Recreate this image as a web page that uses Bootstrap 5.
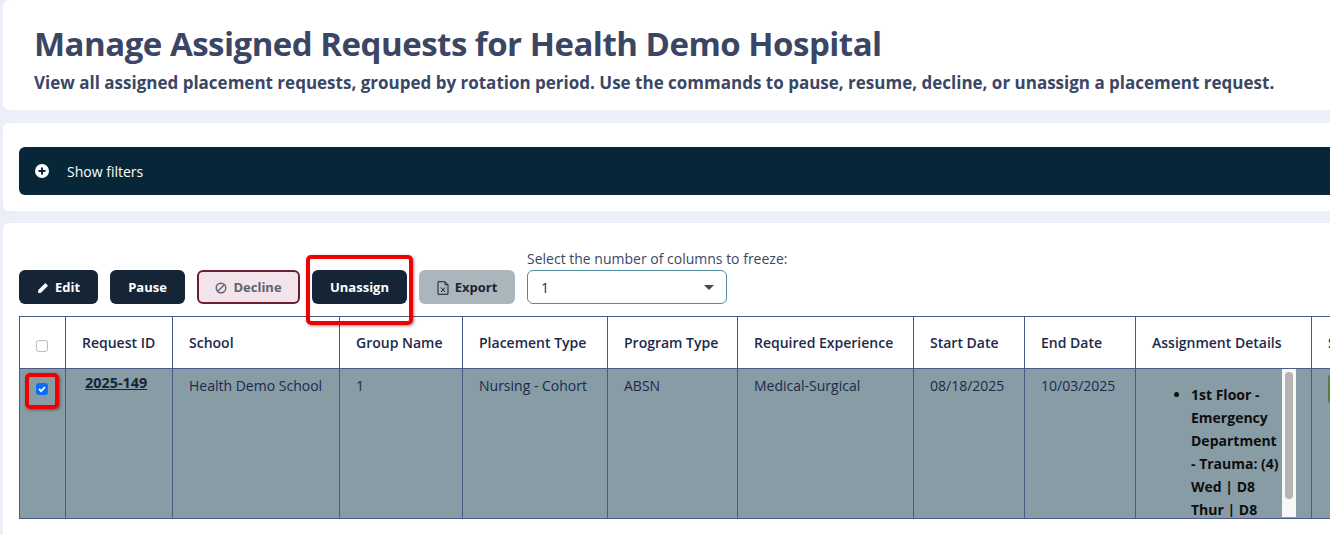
<!DOCTYPE html>
<html lang="en">
  <head>
    <meta charset="utf-8" />
    <meta name="viewport" content="width=device-width, initial-scale=1" />
    <title>Manage Assigned Requests</title>
    <link
      rel="stylesheet"
      href="https://cdn.jsdelivr.net/npm/bootstrap@5.3.0/dist/css/bootstrap.min.css"
    />
    <style>
      html, body { height: 100%; overflow: hidden; }
      body {
        background-color: #eceef8;
        font-family: "Open Sans", "Liberation Sans", sans-serif;
        color: #1b2a4a;
      }
      .page-wrap {
        width: 1600px;
        padding-left: 3px;
        display: flex;
        flex-direction: column;
        gap: 12px;
      }
      .panel { background: #fff; border-radius: 6px; }
      .panel-head { height: 110px; padding: 23px 0 0 31px; margin-bottom: 1px; }
      .panel-head h1 {
        font-size: 33px; font-weight: 700; color: #3b4664; line-height: 42px;
        margin: 0; letter-spacing: -0.5px;
      }
      .panel-head p {
        font-size: 17px; font-weight: 700; color: #3b4664; line-height: 22px;
        margin: 7px 0 0;
      }
      .panel-filter { height: 88px; padding: 24px 16px 0; }
      .filter-bar {
        background: #072638; color: #fff; height: 48px; border-radius: 6px;
        padding-left: 16px; font-size: 14px; gap: 18px;
      }
      .panel-main { height: 330px; padding: 25px 16px 0; position: relative; overflow: hidden; }
      .tool-row { height: 68px; align-items: flex-end; padding-bottom: 12px; }
      .act-btn {
        height: 34px; font-size: 13px; font-weight: 700; border-radius: 6px;
        border: 0; padding: 1px 0 0; display: inline-flex; align-items: center;
        justify-content: center; gap: 6px; color: #fff; background: #152536;
      }
      .act-edit { width: 79px; margin-right: 12px; }
      .act-pause { width: 75px; margin-right: 12px; }
      .act-decline {
        width: 103px; margin-right: 12px; background: #f3e3ea; color: #5c6470;
        border: 2px solid #6b1f33;
      }
      .act-unassign { width: 95px; margin-right: 12px; }
      .act-export { width: 96px; margin-right: 12px; background: #abb5bc; color: #152536; }
      .freeze-label { font-size: 14px; line-height: 19px; color: #3b4664; margin-bottom: 2px; }
      .freeze-select {
        width: 200px; height: 34px; border: 1px solid #4f8a9e; border-radius: 6px;
        padding: 0 12px 0 13px; font-size: 14px; color: #1b2a4a; background: #fff;
      }
      .freeze-caret {
        width: 0; height: 0; border-left: 5px solid transparent;
        border-right: 5px solid transparent; border-top: 5px solid #3f4a5a;
      }
      .req-table {
        table-layout: fixed; border-collapse: collapse; width: 1420px;
        font-size: 14px; margin: 0;
      }
      .req-table th, .req-table td {
        border: 1px solid #4b5a8a; padding: 0 16px; color: #1b2a4a;
      }
      .req-table th { height: 52px; font-weight: 600; background: #fff; padding-bottom: 1px; }
      .req-table td { height: 150px; background: #889ca6; vertical-align: top; padding-top: 6px; }
      .c-check { width: 46px; }
      .c-id { width: 107px; }
      .c-school { width: 167px; }
      .c-group { width: 123px; }
      .c-place { width: 145px; }
      .c-prog { width: 130px; }
      .c-exp { width: 176px; }
      .c-date { width: 111px; }
      .c-assign { width: 176px; }
      .req-table th.cell-check, .req-table td.cell-check { padding: 0; text-align: center; }
      .req-table td.cell-check { padding-top: 14px; }
      .req-table th.cell-check { vertical-align: middle; padding-top: 6px; }
      .box-empty, .box-checked { width: 12px; height: 12px; display: block; margin: 0 0 0 16px; border-radius: 3px; }
      .box-empty { background: #fff; border: 1px solid #bcbcbc; }
      .box-checked { background: #0b6cf5; }
      .req-table td.cell-link { padding-left: 19px; padding-right: 0; }
      .req-link { font-size: 14.4px; font-weight: 700; color: #152536; text-decoration: underline; display: block; margin-top: -3px; }
      .req-table td.cell-assign { padding: 0; }
      .assign-scroll { height: 148px; overflow: hidden; display: flex; }
      .assign-list {
        flex: 1; margin: 0; padding: 14px 0 0 55px; font-weight: 700; color: #0e0e0e;
        line-height: 23px; font-size: 14px;
      }
      .assign-list li { color: #0e0e0e; }
      .fake-scroll { width: 14px; margin-right: 15px; background: #f7f7f7; padding: 3px 3px 0; flex: none; }
      .fake-thumb { width: 8px; height: 127px; background: #b4b4b4; border-radius: 4px; }
      .status-chip { width: 30px; height: 30px; background: #5c7a3a; border-radius: 4px; }
      .req-table td.cell-status { padding: 5px 0 0 16px; }
      .mark-box {
        position: absolute; border: 4px solid #f00000; border-radius: 5px;
        box-shadow: 1px 1px 3px rgba(0, 0, 0, 0.45); pointer-events: none;
      }
      .mark-unassign { left: 303px; top: 32px; width: 107px; height: 70px; }
      .mark-check { left: 22px; top: 150px; width: 34px; height: 36px; }
    </style>
  </head>
  <body>
    <div class="page-wrap">
      <div class="panel panel-head">
        <h1>Manage Assigned Requests for Health Demo Hospital</h1>
        <p>View all assigned placement requests, grouped by rotation period. Use the commands to pause, resume, decline, or unassign a placement request.</p>
      </div>
      <div class="panel panel-filter">
        <div class="filter-bar d-flex align-items-center">
          <svg width="14" height="14" viewBox="0 0 14 14"><circle cx="7" cy="7" r="7" fill="#fff"/><path d="M7 3.5v7M3.5 7h7" stroke="#072638" stroke-width="2"/></svg>
          <span>Show filters</span>
        </div>
      </div>
      <div class="panel panel-main">
        <div class="d-flex tool-row">
          <button class="act-btn act-edit">
            <svg width="12" height="12" viewBox="0 0 12 12"><path d="M8.3 1 11 3.7 4 10.7 1 11l.3-3z" fill="#fff"/></svg>
            Edit
          </button>
          <button class="act-btn act-pause">Pause</button>
          <button class="act-btn act-decline">
            <svg width="12" height="12" viewBox="0 0 12 12" fill="none" stroke="#5c6470" stroke-width="1.4"><circle cx="6" cy="6" r="4.8"/><path d="M2.7 9.3 9.3 2.7"/></svg>
            Decline
          </button>
          <button class="act-btn act-unassign">Unassign</button>
          <button class="act-btn act-export">
            <svg width="12" height="14" viewBox="0 0 12 14" fill="none" stroke="#152536" stroke-width="1"><path d="M1 .7h7l3 3v9.6H1zM8 .7v3h3"/><path d="m4 6.5 4 4.5m0-4.5L4 11"/></svg>
            Export
          </button>
          <div>
            <div class="freeze-label">Select the number of columns to freeze:</div>
            <div class="freeze-select d-flex align-items-center justify-content-between">
              <span>1</span><span class="freeze-caret"></span>
            </div>
          </div>
        </div>
        <table class="req-table">
          <colgroup>
            <col class="c-check" /><col class="c-id" /><col class="c-school" /><col class="c-group" />
            <col class="c-place" /><col class="c-prog" /><col class="c-exp" /><col class="c-date" />
            <col class="c-date" /><col class="c-assign" /><col />
          </colgroup>
          <thead>
            <tr>
              <th class="cell-check"><span class="box-empty"></span></th>
              <th>Request ID</th>
              <th>School</th>
              <th>Group Name</th>
              <th>Placement Type</th>
              <th>Program Type</th>
              <th>Required Experience</th>
              <th>Start Date</th>
              <th>End Date</th>
              <th>Assignment Details</th>
              <th>Status</th>
            </tr>
          </thead>
          <tbody>
            <tr>
              <td class="cell-check"><span class="box-checked d-flex align-items-center justify-content-center"><svg width="10" height="10" viewBox="0 0 10 10" fill="none" stroke="#fff" stroke-width="1.8"><path d="m2 5 2.2 2.2L8 3"/></svg></span></td>
              <td class="cell-link"><a class="req-link" href="#">2025-149</a></td>
              <td>Health Demo School</td>
              <td>1</td>
              <td>Nursing - Cohort</td>
              <td>ABSN</td>
              <td>Medical-Surgical</td>
              <td>08/18/2025</td>
              <td>10/03/2025</td>
              <td class="cell-assign">
                <div class="assign-scroll">
                  <ul class="assign-list">
                    <li>1st Floor - Emergency Department - Trauma: (4)<br />Wed | D8<br />Thur | D8</li>
                  </ul>
                  <div class="fake-scroll"><div class="fake-thumb"></div></div>
                </div>
              </td>
              <td class="cell-status"><div class="status-chip"></div></td>
            </tr>
          </tbody>
        </table>
        <div class="mark-box mark-unassign"></div>
        <div class="mark-box mark-check"></div>
      </div>
    </div>
    <script src="https://cdn.jsdelivr.net/npm/bootstrap@5.3.0/dist/js/bootstrap.bundle.min.js"></script>
  </body>
</html>
